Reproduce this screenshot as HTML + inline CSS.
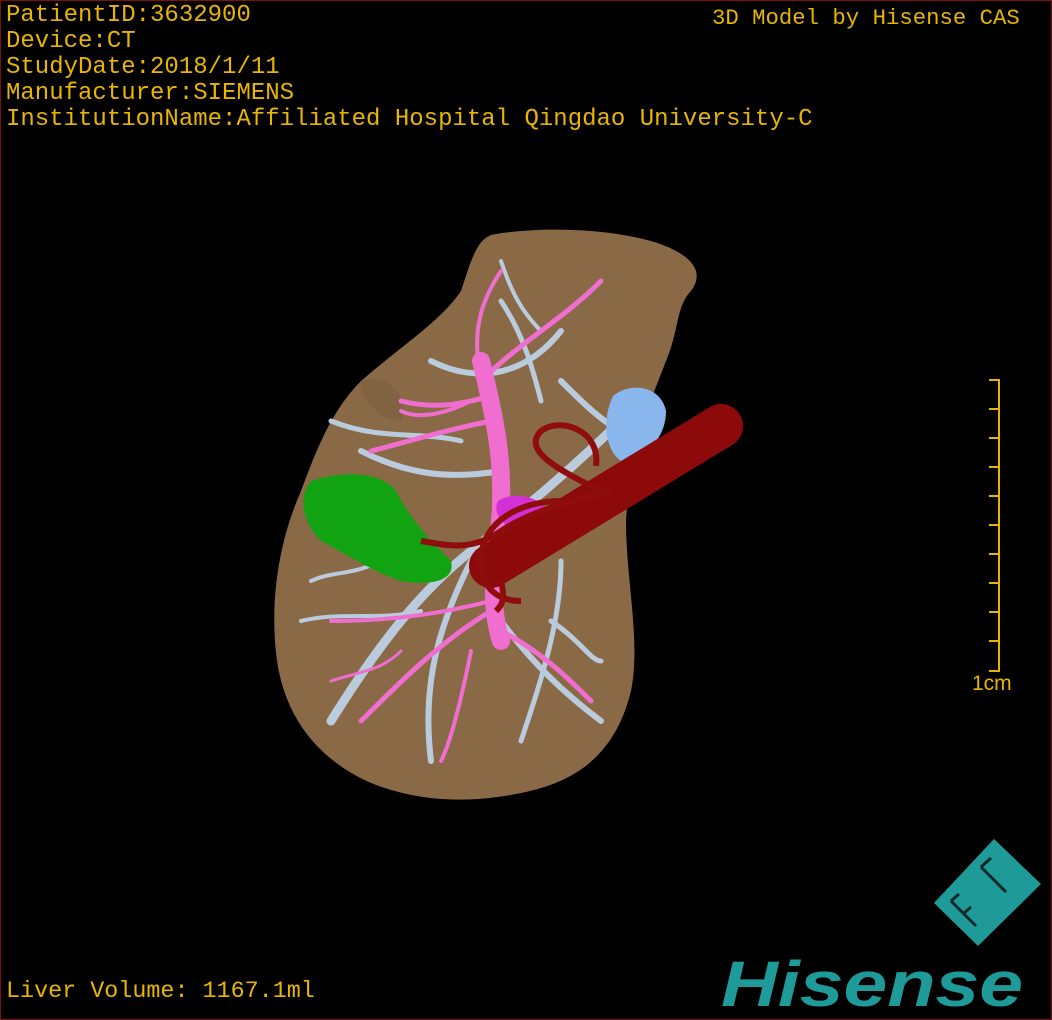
<!DOCTYPE html>
<html><head><meta charset="utf-8"><style>
html,body{margin:0;padding:0;background:#000;}
#w{position:relative;width:1050px;height:1018px;border:1px solid #7a1010;overflow:hidden;background:#000;}
.t{position:absolute;font-family:"Liberation Mono","Noto Sans CJK SC",monospace;color:#e8b500;white-space:pre;line-height:26px;}
</style></head><body><div id="w">
<div class="t" style="left:5px;top:2px;font-size:24px;">PatientID:3632900
Device:CT
StudyDate:2018/1/11
Manufacturer:SIEMENS
InstitutionName:Affiliated Hospital Qingdao University-C</div>
<div class="t" style="left:711px;top:4px;font-size:22.3px;">3D Model by Hisense CAS</div>
<div class="t" style="left:5px;top:978px;font-size:23.4px;">Liver Volume: 1167.1ml</div>
<div class="t" style="left:971px;top:670px;font-family:'Liberation Sans',sans-serif;font-size:21px;">1cm</div>
<svg width="1050" height="1018" style="position:absolute;left:0;top:0">
<g stroke="#e8b500" stroke-width="2">
<line x1="998" y1="378" x2="998" y2="671"/>
<line x1="988" y1="379" x2="999" y2="379"/><line x1="988" y1="408" x2="999" y2="408"/><line x1="988" y1="437" x2="999" y2="437"/><line x1="988" y1="466" x2="999" y2="466"/><line x1="988" y1="495" x2="999" y2="495"/><line x1="988" y1="524" x2="999" y2="524"/><line x1="988" y1="553" x2="999" y2="553"/><line x1="988" y1="582" x2="999" y2="582"/><line x1="988" y1="611" x2="999" y2="611"/><line x1="988" y1="640" x2="999" y2="640"/><line x1="988" y1="670" x2="999" y2="670"/>
</g>
<path d="M490,234 C530,226 600,226 650,240 C690,252 705,270 690,290 C675,305 678,330 665,360 C650,400 630,440 625,520 C625,580 640,640 630,690 C615,750 580,780 520,792 C470,802 420,802 370,782 C320,760 285,720 276,660 C268,600 278,540 300,490 C315,450 330,410 360,380 C400,345 440,320 460,290 C470,260 475,240 490,234Z" fill="#8a6a46"/>
<path d="M360,380 C390,370 410,400 400,420 C380,420 360,400 360,380Z" fill="#7a5c3c" opacity=".5"/>
<g fill="none" stroke="#b9cbdd" stroke-linecap="round">
<path d="M330,720 C380,640 420,590 470,550 C520,510 570,470 640,400" stroke-width="9"/>
<path d="M500,620 C530,660 560,690 600,720" stroke-width="6"/>
<path d="M470,560 C440,620 420,680 430,760" stroke-width="6"/>
<path d="M360,450 C400,470 440,480 500,470" stroke-width="6"/>
<path d="M330,420 C380,440 420,430 460,440" stroke-width="5"/>
<path d="M430,360 C470,380 520,380 560,330" stroke-width="6"/>
<path d="M500,300 C520,330 530,360 540,400" stroke-width="5"/>
<path d="M560,380 C580,400 600,420 620,430" stroke-width="6"/>
<path d="M550,620 C580,640 590,660 600,660" stroke-width="5"/>
<path d="M300,620 C340,610 380,620 420,610" stroke-width="4"/>
<path d="M560,560 C560,620 540,680 520,740" stroke-width="5"/>
<path d="M500,260 C510,290 520,310 540,330" stroke-width="4"/>
<path d="M310,580 C330,570 350,575 380,560" stroke-width="4"/>
</g>
<g fill="none" stroke="#f06ed0" stroke-linecap="round">
<path d="M480,360 C495,420 505,470 498,530 C492,580 490,610 500,640" stroke-width="18"/>
<path d="M490,420 C440,430 410,440 370,450" stroke-width="5"/>
<path d="M480,380 C520,340 560,320 600,280" stroke-width="5"/>
<path d="M480,380 C470,330 480,300 500,270" stroke-width="4"/>
<path d="M490,610 C440,640 400,680 360,720" stroke-width="5"/>
<path d="M500,630 C540,650 570,680 590,700" stroke-width="5"/>
<path d="M490,600 C450,610 400,620 330,620" stroke-width="4"/>
<path d="M470,650 C460,700 450,740 440,760" stroke-width="4"/>
<path d="M330,680 C360,670 380,670 400,650" stroke-width="3"/>
<path d="M400,410 C420,420 450,410 470,400" stroke-width="4"/>
<path d="M400,400 C440,410 470,400 490,395" stroke-width="5"/>
</g>
<path d="M612,395 C630,380 660,385 665,410 C665,440 640,460 620,460 C605,450 600,420 612,395Z" fill="#8ab6ee"/>
<path d="M310,480 C340,470 380,470 395,490 C410,520 430,540 450,560 C455,580 430,585 400,580 C370,570 340,550 320,540 C300,520 298,495 310,480Z" fill="#12a312"/>
<path d="M497,500 C510,490 540,495 545,510 C545,525 525,530 510,528 C498,520 492,510 497,500Z" fill="#d530d5"/>
<path d="M490,565 L720,425" stroke="#8c0a0a" stroke-width="44" stroke-linecap="round" fill="none"/>
<g fill="none" stroke="#8f0d0d" stroke-width="6">
<path d="M600,490 C560,470 520,450 540,430 C560,415 600,430 595,465"/>
<path d="M610,490 C570,500 530,510 500,530 C470,550 450,545 420,540"/>
<path d="M560,500 C520,500 480,520 480,560 C480,590 500,600 520,600"/>
<path d="M500,580 C505,600 500,605 495,610"/>
</g>
<polygon points="993,838 1040,883 977,945 933,902" fill="#1e9a98"/>
<g fill="none" stroke="#0a2a2a" stroke-width="3">
<path d="M950,900 L975,925 M950,900 L958,893 M962,913 L970,906"/>
<path d="M980,866 L1005,891 M980,866 L990,857"/>
</g>
<text x="720" y="1005" font-family="Liberation Sans,sans-serif" font-weight="bold" font-style="italic" font-size="64" fill="#1e9a98" textLength="302" lengthAdjust="spacingAndGlyphs">Hisense</text>
</svg>
</div></body></html>
